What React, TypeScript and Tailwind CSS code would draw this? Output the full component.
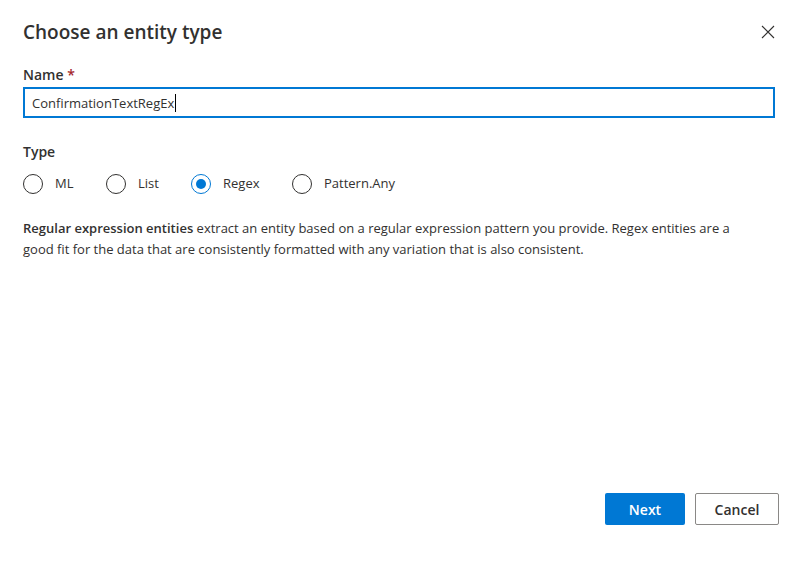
import React from "react";

function Radio({ label, checked }: { label: string; checked?: boolean }) {
  return (
    <div className="flex items-center">
      <span
        className={`flex h-5 w-5 items-center justify-center rounded-full border ${
          checked ? "border-[#0078d4]" : "border-[#323130]"
        }`}
      >
        {checked && <span className="h-[10px] w-[10px] rounded-full bg-[#0078d4]" />}
      </span>
      <span className="ml-[12px] text-[13px] text-[#323130]">{label}</span>
    </div>
  );
}

export default function App() {
  return (
    <div
      className="relative flex h-[572px] w-[798px] flex-col bg-white text-[#323130]"
      style={{ fontFamily: '"Segoe UI", "Open Sans", "Noto Sans", sans-serif' }}
    >
      <div className="flex items-center justify-between pl-[23px] pr-[24px] pt-[18px]">
        <h1 className="text-[19px] font-semibold leading-[28px] text-[#323130]">Choose an entity type</h1>
        <svg width="14" height="14" viewBox="0 0 14 14" className="mr-[-1px]">
          <path d="M1 1L13 13M13 1L1 13" stroke="#323130" strokeWidth="1.1" />
        </svg>
      </div>

      <div className="flex flex-col px-[23px]">
        <label className="mt-[19px] text-[14px] font-semibold leading-[20px]">
          Name <span className="text-[#a4262c]">*</span>
        </label>
        <div className="mt-[2px] flex h-[31px] w-[752px] items-center border-2 border-[#0078d4] px-[7px]">
          <span className="text-[13px] leading-[20px]">ConfirmationTextRegEx</span>
          <span className="ml-[1px] h-[18px] w-[1px] bg-[#000]" />
        </div>

        <div className="mt-[24px] text-[14px] font-semibold leading-[20px]">Type</div>
        <div className="mt-[12px] flex items-center">
          <div className="w-[83px]"><Radio label="ML" /></div>
          <div className="w-[85px]"><Radio label="List" /></div>
          <div className="w-[101px]"><Radio label="Regex" checked /></div>
          <div><Radio label="Pattern.Any" /></div>
        </div>

        <p className="mt-[24px] w-[740px] text-[13px] leading-[21px] text-[#323130]">
          <span className="font-semibold">Regular expression entities</span> extract an entity based on a regular
          expression pattern you provide. Regex entities are a good fit for the data that are consistently formatted
          with any variation that is also consistent.
        </p>
      </div>

      <div className="mt-auto mb-[47px] flex justify-end gap-[10px] pr-[19px]">
        <button className="h-[32px] w-[80px] rounded-[2px] bg-[#0078d4] text-[14px] font-semibold text-white">
          Next
        </button>
        <button className="h-[32px] w-[84px] rounded-[2px] border border-[#8a8886] bg-white text-[14px] font-semibold text-[#323130]">
          Cancel
        </button>
      </div>
    </div>
  );
}
